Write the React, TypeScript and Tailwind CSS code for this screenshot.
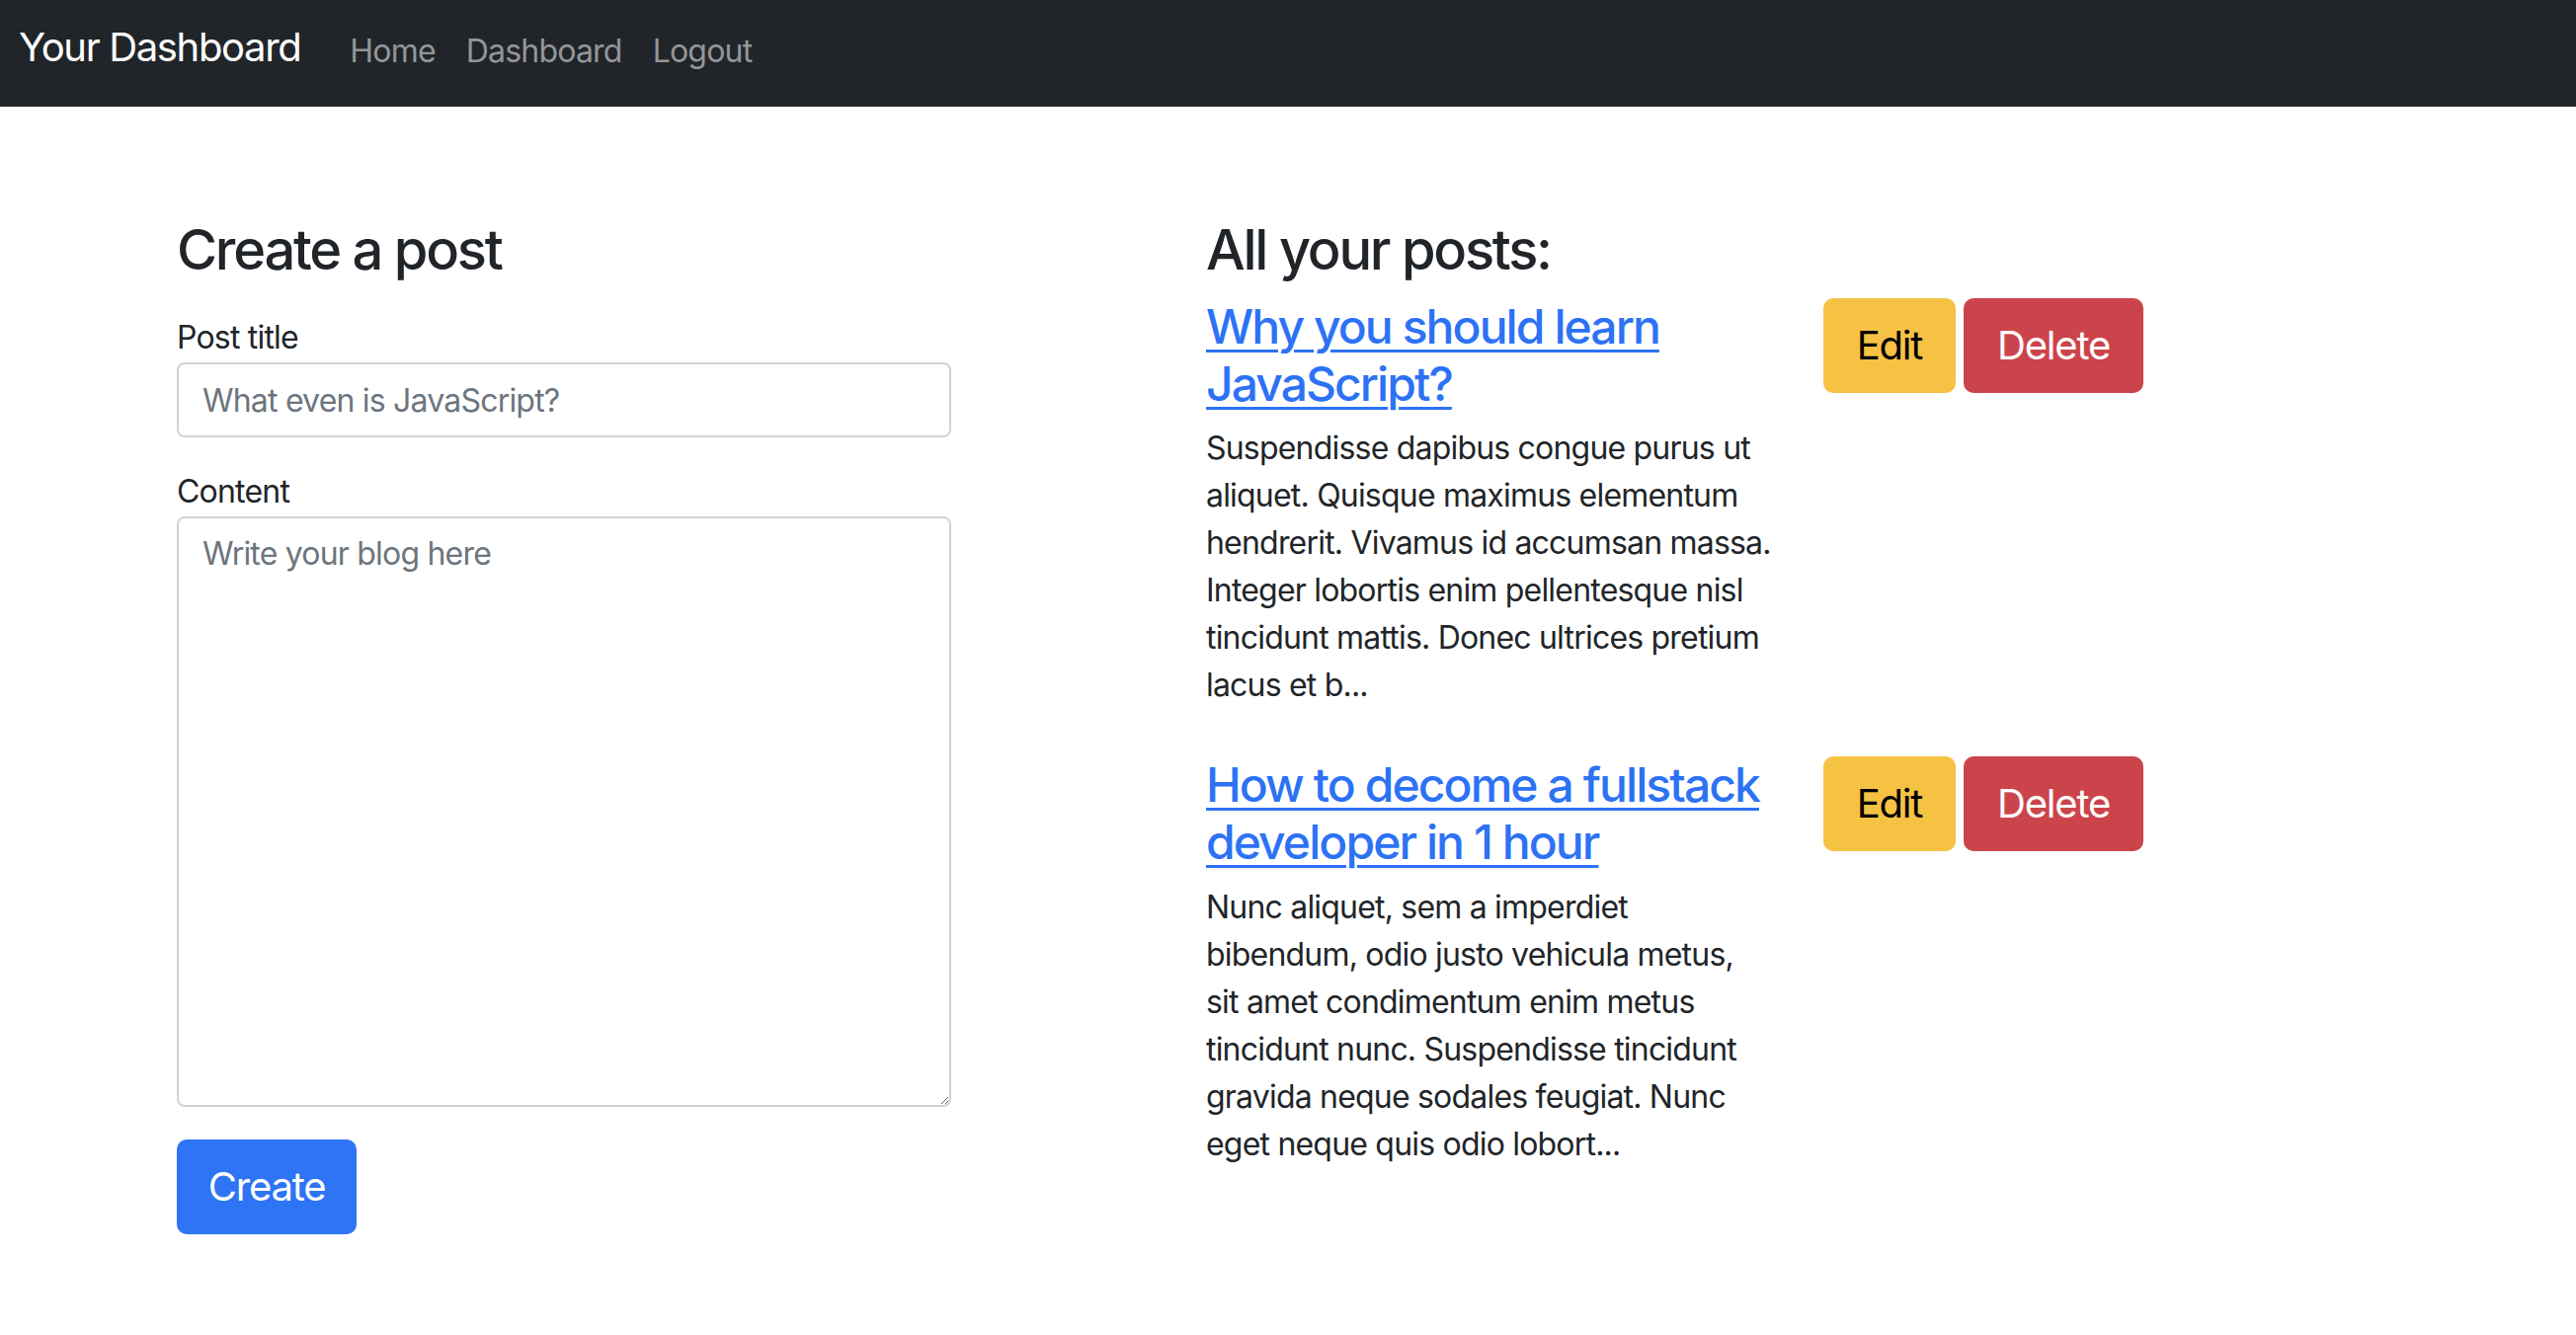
import React from "react";

const posts = [
  {
    title: ["Why you should learn", "JavaScript?"],
    body: [
      "Suspendisse dapibus congue purus ut",
      "aliquet. Quisque maximus elementum",
      "hendrerit. Vivamus id accumsan massa.",
      "Integer lobortis enim pellentesque nisl",
      "tincidunt mattis. Donec ultrices pretium",
      "lacus et b...",
    ],
  },
  {
    title: ["How to decome a fullstack", "developer in 1 hour"],
    body: [
      "Nunc aliquet, sem a imperdiet",
      "bibendum, odio justo vehicula metus,",
      "sit amet condimentum enim metus",
      "tincidunt nunc. Suspendisse tincidunt",
      "gravida neque sodales feugiat. Nunc",
      "eget neque quis odio lobort...",
    ],
  },
];

export default function App() {
  return (
    <div className="min-h-screen bg-white font-['Inter','Liberation_Sans',sans-serif] text-[#212529]">
      <nav className="flex h-[108px] items-start bg-[#212529] pl-[19px]">
        <a href="#" className="mt-[18px] text-[40px] leading-[60px] tracking-[-0.034em] text-white">
          Your Dashboard
        </a>
        <ul className="ml-[50px] mt-[28px] flex gap-[31px] text-[32px] leading-[48px] tracking-[-0.025em] text-[#949698]">
          <li>
            <a href="#">Home</a>
          </li>
          <li>
            <a href="#">Dashboard</a>
          </li>
          <li>
            <a href="#">Logout</a>
          </li>
        </ul>
      </nav>

      <main className="flex pl-[179px] pt-[112px]">
        <section className="w-[784px] shrink-0">
          <h3 className="mb-[31px] text-[56px] font-medium leading-[1.2] tracking-[-0.04em]">Create a post</h3>
          <form onSubmit={(e) => e.preventDefault()}>
            <label className="block text-[32px] leading-[48px] tracking-[-0.025em]">Post title</label>
            <input
              type="text"
              placeholder="What even is JavaScript?"
              className="mb-[31px] mt-[1px] block h-[76px] w-full rounded-[8px] border-2 border-[#ced4da] px-[24px] py-[12px] text-[32px] leading-[48px] tracking-[-0.025em] outline-none placeholder:text-[#6c757d]"
            />
            <label className="block text-[32px] leading-[48px] tracking-[-0.025em]">Content</label>
            <textarea
              placeholder="Write your blog here"
              className="mb-[33px] mt-[1px] block h-[598px] w-full rounded-[8px] border-2 border-[#ced4da] px-[24px] py-[12px] text-[32px] leading-[48px] tracking-[-0.025em] outline-none placeholder:text-[#6c757d]"
            />
            <button
              type="submit"
              className="flex h-[96px] w-[182px] items-center justify-center rounded-[10px] bg-[#2e74f5] text-[40px] leading-[60px] tracking-[-0.03em] text-white"
            >
              Create
            </button>
          </form>
        </section>

        <section className="ml-[258px]">
          <h3 className="mb-[15px] text-[56px] font-medium leading-[1.2] tracking-[-0.04em]">All your posts:</h3>
          {posts.map((p, i) => (
            <div key={i} className="mb-[48px] flex items-start">
              <div className="w-[580px] shrink-0">
                <h4 className="mb-[13px] text-[48px] font-medium leading-[1.2] tracking-[-0.04em]">
                  <a
                    href="#"
                    className="whitespace-nowrap text-[#2d72f4] underline decoration-[length:3px] underline-offset-[6px]"
                  >
                    {p.title[0]}
                    <br />
                    {p.title[1]}
                  </a>
                </h4>
                <p className="whitespace-nowrap text-[32px] leading-[48px] tracking-[-0.025em]">
                  {p.body.map((line, j) => (
                    <React.Fragment key={j}>
                      {line}
                      {j < p.body.length - 1 && <br />}
                    </React.Fragment>
                  ))}
                </p>
              </div>
              <div className="ml-[45px] flex gap-[8px]">
                <button className="flex h-[96px] w-[134px] items-center justify-center rounded-[10px] bg-[#f6c244] text-[40px] leading-[60px] tracking-[-0.03em] text-black">
                  Edit
                </button>
                <button className="flex h-[96px] w-[182px] items-center justify-center rounded-[10px] bg-[#cc444b] text-[40px] leading-[60px] tracking-[-0.03em] text-white">
                  Delete
                </button>
              </div>
            </div>
          ))}
        </section>
      </main>
    </div>
  );
}
